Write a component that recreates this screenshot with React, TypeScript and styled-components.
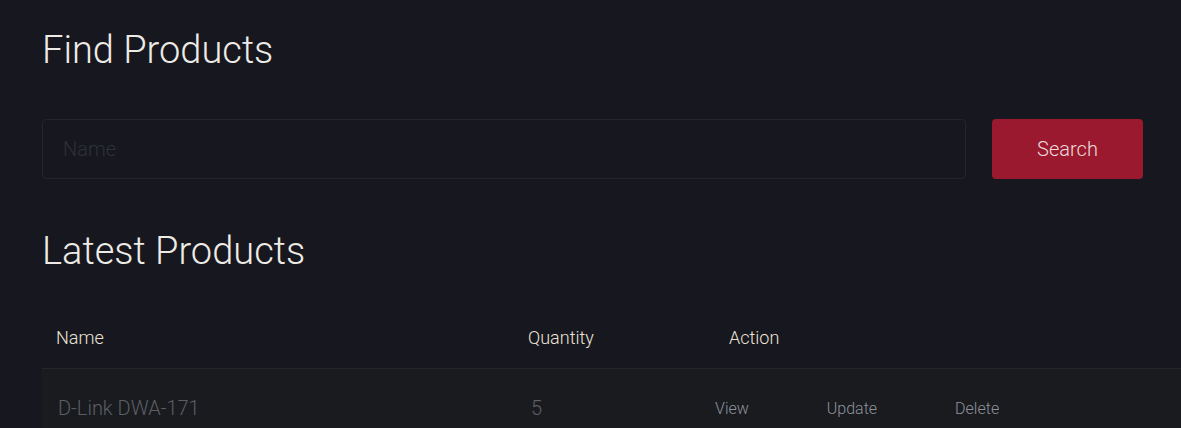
import React from "react";
import styled, { createGlobalStyle } from "styled-components";

const Global = createGlobalStyle`
  html, body { margin: 0; padding: 0; background: #17181f; }
  body { font-family: Roboto, "Liberation Sans", sans-serif; overflow: hidden; }
  * { box-sizing: border-box; }
`;

const Page = styled.div`
  width: 1181px;
  height: 428px;
  padding: 26px 0 0 42px;
  background: #17181f;
  overflow: hidden;
`;

const Title = styled.h1`
  margin: 0;
  font-size: 38px;
  line-height: 48px;
  font-weight: 300;
  color: #eeebe6;
`;

const SearchRow = styled.form`
  display: flex;
  align-items: stretch;
  gap: 26px;
  margin: 45px 0 0 0;
  width: 1101px;
`;

const NameInput = styled.input`
  flex: 0 0 924px;
  height: 60px;
  background: #17181f;
  border: 1px solid #24252b;
  border-radius: 4px;
  padding: 0 20px;
  font-family: Roboto, "Liberation Sans", sans-serif;
  font-size: 20px;
  font-weight: 300;
  color: #d0d0d0;
  outline: none;
  &::placeholder { color: #2d303a; }
`;

const SearchButton = styled.button`
  flex: 0 0 151px;
  height: 60px;
  background: #9a192e;
  border: none;
  border-radius: 4px;
  font-family: Roboto, "Liberation Sans", sans-serif;
  font-size: 20px;
  font-weight: 300;
  color: #ecd9dc;
  cursor: pointer;
`;

const SectionTitle = styled(Title)`
  margin-top: 48px;
`;

const Table = styled.div`
  margin-top: 31px;
  width: 1160px;
`;

const Row = styled.div<{ $head?: boolean }>`
  display: grid;
  grid-template-columns: 472px 201px 1fr;
  align-items: center;
  height: ${(p) => (p.$head ? "63px" : "78px")};
  background: ${(p) => (p.$head ? "transparent" : "#1a1b1f")};
  border-bottom: ${(p) => (p.$head ? "1px solid #25262b" : "none")};
`;

const HeadCell = styled.div<{ $pad: number }>`
  padding-left: ${(p) => p.$pad}px;
  padding-top: 1px;
  font-size: 18px;
  font-weight: 300;
  color: #ece3d8;
`;

const Cell = styled.div<{ $pad: number }>`
  padding-left: ${(p) => p.$pad}px;
  font-size: 20px;
  font-weight: 300;
  color: #5b5e67;
`;

const Actions = styled.div`
  display: flex;
  gap: 78px;
  padding-left: 0;
  padding-top: 1px;
`;

const ActionButton = styled.button`
  background: none;
  border: none;
  padding: 0;
  font-family: Roboto, "Liberation Sans", sans-serif;
  font-size: 16px;
  font-weight: 300;
  color: #8c929c;
  cursor: pointer;
`;

export default function App() {
  return (
    <>
      <Global />
      <Page>
        <Title>Find Products</Title>
        <SearchRow onSubmit={(e) => e.preventDefault()}>
          <NameInput placeholder="Name" />
          <SearchButton type="submit">Search</SearchButton>
        </SearchRow>
        <SectionTitle>Latest Products</SectionTitle>
        <Table>
          <Row $head>
            <HeadCell $pad={14}>Name</HeadCell>
            <HeadCell $pad={14}>Quantity</HeadCell>
            <HeadCell $pad={14}>Action</HeadCell>
          </Row>
          <Row>
            <Cell $pad={16}>D-Link DWA-171</Cell>
            <Cell $pad={17}>5</Cell>
            <Actions>
              <ActionButton>View</ActionButton>
              <ActionButton>Update</ActionButton>
              <ActionButton>Delete</ActionButton>
            </Actions>
          </Row>
        </Table>
      </Page>
    </>
  );
}
